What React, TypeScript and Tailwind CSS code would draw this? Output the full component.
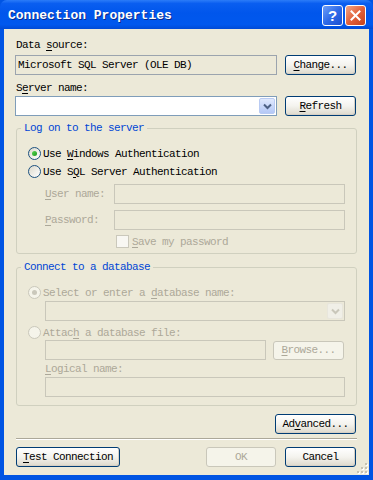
import React from 'react';

const U = ({ children }: { children: React.ReactNode }) => (
  <span className="underline underline-offset-[2px]">{children}</span>
);

const Btn = ({
  children,
  className = '',
  disabled = false,
}: {
  children: React.ReactNode;
  className?: string;
  disabled?: boolean;
}) => (
  <div
    className={
      'flex items-center justify-center rounded-[3px] border ' +
      (disabled
        ? 'border-[#C9C7BA] bg-[#F5F4EA] text-[#ACA899] '
        : 'border-[#003C74] bg-linear-to-b from-white via-[#F4F3EE] to-[#DDD9CC] shadow-[inset_-1px_-1px_0_#D6D0C5] ') +
      className
    }
  >
    {children}
  </div>
);

const Radio = ({ checked = false, disabled = false }: { checked?: boolean; disabled?: boolean }) => (
  <div
    className={
      'w-[13px] h-[13px] rounded-full border flex items-center justify-center shrink-0 ' +
      (disabled
        ? 'border-[#CAC8BB] bg-[#F5F4EA]'
        : 'border-[#1C5180] bg-linear-to-br from-[#DCD9CB] to-white')
    }
  >
    {checked && (
      <div
        className={
          'w-[5px] h-[5px] rounded-full ' +
          (disabled ? 'bg-[#CAC8BB]' : 'bg-linear-to-br from-[#55D551] to-[#1B9A1B]')
        }
      />
    )}
  </div>
);

const ComboArrow = ({ disabled = false }: { disabled?: boolean }) => (
  <div
    className={
      'w-[16px] h-[16px] rounded-[2px] flex items-center justify-center border ' +
      (disabled
        ? 'border-[#E8E6DC] bg-[#F0EFE7]'
        : 'border-[#B9CBF3] bg-linear-to-b from-[#E0E9FD] to-[#B4C8F6]')
    }
  >
    <svg width="9" height="7" viewBox="0 0 9 7">
      <path
        d="M1 1.5 L4.5 5 L8 1.5"
        fill="none"
        stroke={disabled ? '#C9C7BA' : '#4D6185'}
        strokeWidth="2"
      />
    </svg>
  </div>
);

export default function App() {
  return (
    <div className="w-[373px] h-[480px] bg-[#0054E3] font-['Liberation_Mono',monospace] text-[11px] leading-[12px] tracking-[-0.6px] text-black">
      <div className="w-full h-full flex flex-col rounded-t-[7px] overflow-hidden bg-[#0054E3]">
        {/* title bar */}
        <div className="h-[29px] shrink-0 flex items-center pt-[2px] pl-[8px] pr-[7px] bg-[linear-gradient(to_bottom,#2B7CF8_0%,#0A5EF0_12%,#0056EC_45%,#0058EE_85%,#004AD6_100%)]">
          <span className="font-bold text-[13px] leading-[14px] tracking-[0px] text-white [text-shadow:1px_1px_0_#0A2C8C]">
            Connection Properties
          </span>
          <div className="ml-auto flex gap-[2px]">
            <div className="w-[21px] h-[21px] rounded-[3px] border border-white bg-linear-to-br from-[#6D9EF8] via-[#2F6BE8] to-[#1B4ED0] flex items-center justify-center">
              <span className="text-white font-bold text-[15px] leading-[15px] tracking-[0px] font-['Liberation_Sans',sans-serif]">?</span>
            </div>
            <div className="w-[21px] h-[21px] rounded-[3px] border border-white bg-linear-to-br from-[#F0A585] via-[#E2613A] to-[#C5421B] flex items-center justify-center">
              <svg width="11" height="11" viewBox="0 0 11 11">
                <path d="M1.5 1.5 L9.5 9.5 M9.5 1.5 L1.5 9.5" stroke="white" strokeWidth="2" strokeLinecap="square" />
              </svg>
            </div>
          </div>
        </div>

        {/* client area */}
        <div className="flex-1 mx-[4px] mb-[5px] bg-[#ECE9D8] px-[12px] flex flex-col relative">
          <div className="mt-[10px]">
            Data <U>s</U>ource:
          </div>
          <div className="mt-[4px] flex items-center -ml-[1px]">
            <div className="w-[262px] h-[20px] border border-[#9BA4AE] bg-[#ECE9D8] flex items-center pl-[2px]">
              Microsoft SQL Server (OLE DB)
            </div>
            <Btn className="ml-[8px] w-[71px] h-[20px]">
              <span>
                <U>C</U>hange...
              </span>
            </Btn>
          </div>

          <div className="mt-[7px]">
            S<U>e</U>rver name:
          </div>
          <div className="mt-[2px] flex items-center -ml-[1px]">
            <div className="w-[262px] h-[20px] border border-[#7F9DB9] bg-white flex items-center justify-end pr-[1px]">
              <ComboArrow />
            </div>
            <Btn className="ml-[8px] w-[71px] h-[20px]">
              <span>
                <U>R</U>efresh
              </span>
            </Btn>
          </div>

          {/* Log on to the server */}
          <fieldset className="mt-[6px] border border-[#D0D0BF] rounded-[3px] px-[11px] pb-[5px]">
            <legend className="-ml-[7px] px-[3px] text-[#0046D5]">Log on to the server</legend>
            <div className="mt-[13px] flex items-center gap-[2px] h-[13px]">
              <Radio checked />
              <span>
                Use <U>W</U>indows Authentication
              </span>
            </div>
            <div className="mt-[5px] flex items-center gap-[2px] h-[13px]">
              <Radio />
              <span>
                Use S<U>Q</U>L Server Authentication
              </span>
            </div>
            <div className="mt-[6px] flex items-center pl-[17px] text-[#ACA899]">
              <span className="w-[69px]">
                <U>U</U>ser name:
              </span>
              <div className="flex-1 h-[20px] border border-[#C9C7BA] bg-[#ECE9D8]" />
            </div>
            <div className="mt-[6px] flex items-center pl-[17px] text-[#ACA899]">
              <span className="w-[69px]">
                <U>P</U>assword:
              </span>
              <div className="flex-1 h-[20px] border border-[#C9C7BA] bg-[#ECE9D8]" />
            </div>
            <div className="mt-[5px] flex items-center gap-[3px] pl-[88px] h-[13px] text-[#ACA899]">
              <div className="w-[13px] h-[13px] border border-[#CAC8BB] bg-[#F8F7F2]" />
              <span>
                <U>S</U>ave my password
              </span>
            </div>
          </fieldset>

          {/* Connect to a database */}
          <fieldset className="mt-[7px] border border-[#D0D0BF] rounded-[3px] px-[11px] pb-[8px]">
            <legend className="-ml-[7px] px-[3px] text-[#0046D5]">Connect to a database</legend>
            <div className="mt-[13px] flex items-center gap-[2px] h-[13px] text-[#ACA899]">
              <Radio checked disabled />
              <span>
                Select or enter a <U>d</U>atabase name:
              </span>
            </div>
            <div className="mt-[2px] ml-[17px] h-[20px] border border-[#C9C7BA] bg-[#ECE9D8] flex items-center justify-end pr-[1px]">
              <ComboArrow disabled />
            </div>
            <div className="mt-[5px] flex items-center gap-[2px] h-[13px] text-[#ACA899]">
              <Radio disabled />
              <span>
                Attac<U>h</U> a database file:
              </span>
            </div>
            <div className="mt-[1px] ml-[17px] flex items-center">
              <div className="w-[221px] h-[20px] border border-[#C9C7BA] bg-[#ECE9D8]" />
              <Btn disabled className="ml-[7px] w-[71px] h-[19px]">
                <span>
                  <U>B</U>rowse...
                </span>
              </Btn>
            </div>
            <div className="mt-[3px] ml-[17px] text-[#ACA899]">
              <U>L</U>ogical name:
            </div>
            <div className="mt-[2px] ml-[17px] h-[20px] border border-[#C9C7BA] bg-[#ECE9D8]" />
          </fieldset>

          <div className="mt-[8px] flex justify-end pr-[1px]">
            <Btn className="w-[81px] h-[20px]">
              <span>
                Ad<U>v</U>anced...
              </span>
            </Btn>
          </div>

          <div className="mt-[4px] border-t border-[#ACA899] border-b border-b-white" />

          <div className="mt-[7px] flex items-center pr-[1px]">
            <Btn className="w-[104px] h-[20px]">
              <span>
                <U>T</U>est Connection
              </span>
            </Btn>
            <Btn disabled className="ml-auto w-[70px] h-[20px]">
              OK
            </Btn>
            <Btn className="ml-[9px] w-[71px] h-[20px]">Cancel</Btn>
          </div>

          {/* size grip */}
          <svg className="absolute right-[1px] bottom-[1px]" width="11" height="11" viewBox="0 0 11 11">
            {[
              [8, 0],
              [8, 4],
              [4, 4],
              [8, 8],
              [4, 8],
              [0, 8],
            ].map(([x, y]) => (
              <g key={`${x}-${y}`}>
                <rect x={x + 1} y={y + 1} width="2" height="2" fill="#FFFFFF" />
                <rect x={x} y={y} width="2" height="2" fill="#C5C2B2" />
              </g>
            ))}
          </svg>
        </div>
      </div>
    </div>
  );
}
